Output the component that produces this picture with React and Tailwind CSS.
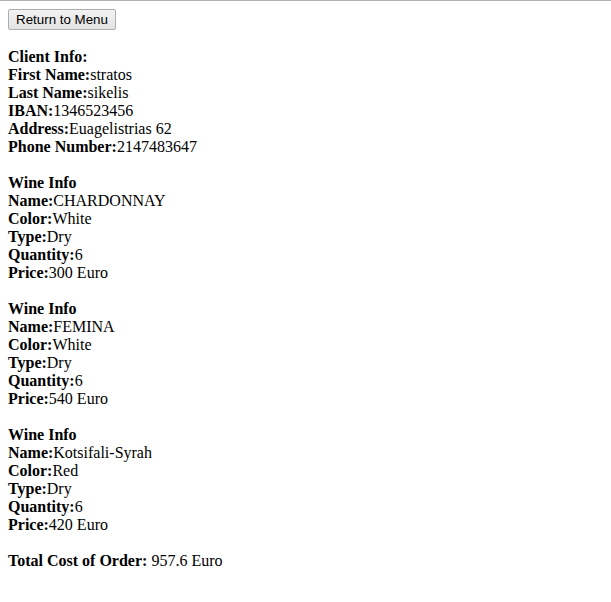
export default function App() {
  const wines = [
    { name: "CHARDONNAY", color: "White", type: "Dry", qty: "6", price: "300 Euro" },
    { name: "FEMINA", color: "White", type: "Dry", qty: "6", price: "540 Euro" },
    { name: "Kotsifali-Syrah", color: "Red", type: "Dry", qty: "6", price: "420 Euro" },
  ];
  const Row = ({ label, value }) => (
    <div>
      <b className="font-bold">{label}</b>
      {value}
    </div>
  );
  return (
    <div className="min-h-[602px] bg-white border-t border-[#b0b0b0] text-black">
      <div className="px-2 pt-2" style={{ fontFamily: '"Liberation Serif", "Times New Roman", serif' }}>
        <button
          className="flex items-center justify-center w-[108px] h-[21px] border border-[#adadad] rounded-[2px] bg-gradient-to-b from-[#f2f2f2] to-[#e3e3e3] text-[13.33px] text-black"
          style={{ fontFamily: '"Liberation Sans", Arial, sans-serif' }}
        >
          Return to Menu
        </button>
        <div className="mt-[18px] text-[16px] leading-[18px]">
          <div className="font-bold">Client Info:</div>
          <Row label="First Name:" value="stratos" />
          <Row label="Last Name:" value="sikelis" />
          <Row label="IBAN:" value="1346523456" />
          <Row label="Address:" value="Euagelistrias 62" />
          <Row label="Phone Number:" value="2147483647" />
          {wines.map((w, i) => (
            <div key={i} className="mt-[18px]">
              <div className="font-bold">Wine Info</div>
              <Row label="Name:" value={w.name} />
              <Row label="Color:" value={w.color} />
              <Row label="Type:" value={w.type} />
              <Row label="Quantity:" value={w.qty} />
              <Row label="Price:" value={w.price} />
            </div>
          ))}
          <div className="mt-[18px]">
            <b className="font-bold">Total Cost of Order:</b> 957.6 Euro
          </div>
        </div>
      </div>
    </div>
  );
}
